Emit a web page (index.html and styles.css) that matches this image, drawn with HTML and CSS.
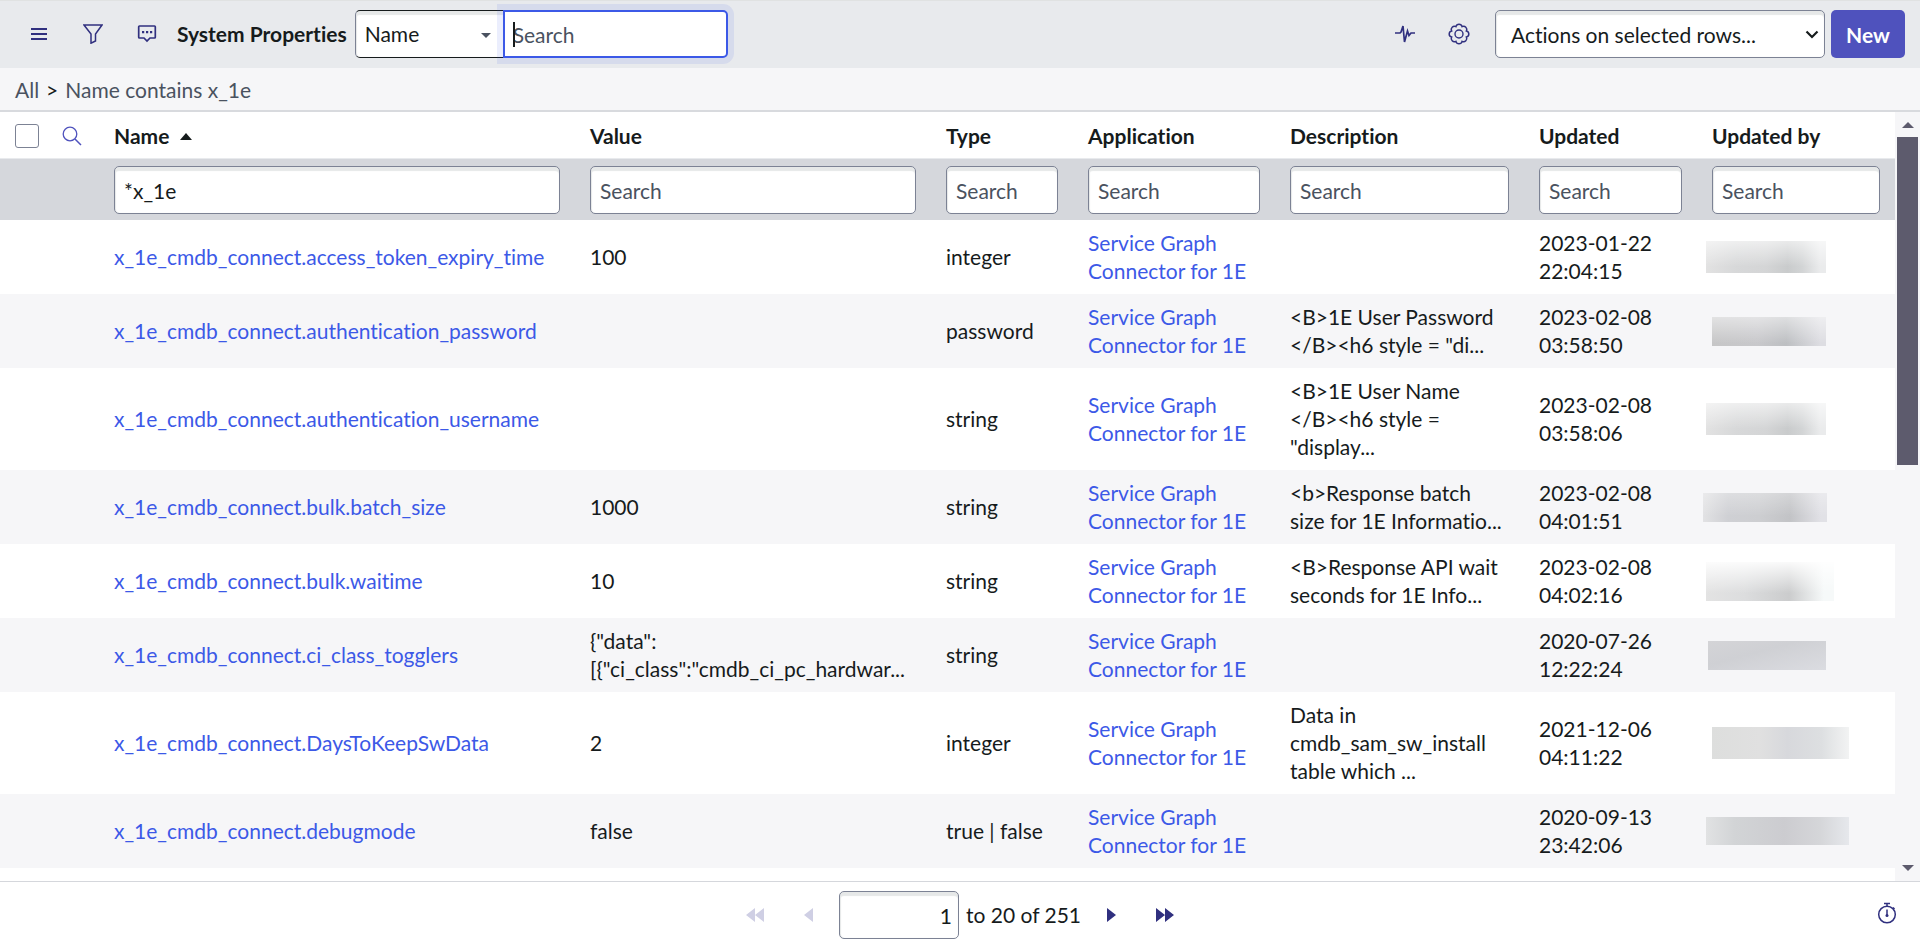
FILE: index.html
```
<!DOCTYPE html>
<html lang="en">
<head>
    <meta charset="utf-8">
    <title>System Properties</title>
    <link rel="stylesheet" href="styles.css">
</head>
<body>
    <header class="toolbar">
        <button class="icon-btn" aria-label="Menu">
            <svg width="20" height="20" viewBox="0 0 20 20"><path d="M2 5h16M2 10h16M2 15h16" fill="none" stroke="currentColor" stroke-width="2"/></svg>
        </button>
        <button class="icon-btn" aria-label="Filter">
            <svg width="20" height="20" viewBox="0 0 20 20"><path d="M1 1h18l-6.500 9v7L8 19.200V10z" fill="none" stroke="currentColor" stroke-width="1.500"/></svg>
        </button>
        <button class="icon-btn" aria-label="Chat">
            <svg width="20" height="20" viewBox="0 0 20 20"><path d="M2.500 2h15q.8 0 .8.8v10.400q0 .8-.8.8H13l-3 3-3-3H2.500q-.8 0-.8-.8V2.800q0-.8.8-.8z" fill="none" stroke="currentColor" stroke-width="1.700"/><path d="M5 7h2.200v2.200H5zM9 7h2.200v2.200H9zM13 7h2.200v2.200H13z" fill="currentColor"/></svg>
        </button>
        <h1 class="title">System Properties</h1>
        <div class="search-group">
            <div class="field-wrap">
                <select class="control field" aria-label="Search field">
                    <option>Name</option>
                </select>
            </div>
            <div class="goto-wrap">
                <input class="control goto" type="text" placeholder="Search" aria-label="Search">
                <span class="caret"></span>
            </div>
        </div>
        <div class="toolbar-right">
            <button class="icon-btn" aria-label="Activity">
                <svg width="20" height="20" viewBox="0 0 20 20"><path d="M0 9h5l1-1 2-6 1.500 16L12.500 7l1.500 4.500L16 9h4" fill="none" stroke="currentColor" stroke-width="1.700"/></svg>
            </button>
            <button class="icon-btn" aria-label="Settings">
                <svg width="22" height="22" viewBox="0 0 22 22"><path d="M18.400 14.100A3.200 3.200 0 0 1 14.100 18.400A3.200 3.200 0 0 1 7.900 18.400A3.200 3.200 0 0 1 3.600 14.100A3.200 3.200 0 0 1 3.600 7.900A3.200 3.200 0 0 1 7.900 3.600A3.200 3.200 0 0 1 14.100 3.600A3.200 3.200 0 0 1 18.400 7.900A3.200 3.200 0 0 1 18.400 14.100z" fill="none" stroke="currentColor" stroke-width="1.500"/><circle cx="11" cy="11" r="4" fill="none" stroke="currentColor" stroke-width="1.400"/></svg>
            </button>
            <div class="actions-wrap">
                <select class="control actions" aria-label="Actions">
                    <option>Actions on selected rows...</option>
                </select>
                <svg class="chevron" width="14" height="9" viewBox="0 0 14 9"><path d="M1.500 1.500L7 7l5.500-5.500" fill="none" stroke="currentColor" stroke-width="2.200"/></svg>
            </div>
            <button class="new-btn">New</button>
        </div>
    </header>

    <nav class="breadcrumb">
        <a href="#">All</a><span class="sep">&gt;</span><a href="#">Name contains x_1e</a>
    </nav>

    <main class="list">
        <div class="list-scroll">
            <table>
                <colgroup>
                    <col class="col-check"><col class="col-icon"><col><col class="col-value"><col class="col-type">
                    <col class="col-app"><col class="col-desc"><col class="col-updated"><col class="col-by">
                </colgroup>
                <thead>
                    <tr class="head-row">
                        <th><input class="check" type="checkbox" aria-label="Select all"></th>
                        <th>
                            <button class="find-btn" aria-label="Toggle search row">
                                <svg width="20" height="20" viewBox="0 0 20 20"><circle cx="8" cy="8" r="6.800" fill="none" stroke="currentColor" stroke-width="1.300"/><path d="M13 13l6 6" stroke="currentColor" stroke-width="1.500"/></svg>
                            </button>
                        </th>
                        <th>Name <span class="sort"></span></th>
                        <th>Value</th>
                        <th>Type</th>
                        <th>Application</th>
                        <th>Description</th>
                        <th>Updated</th>
                        <th>Updated by</th>
                    </tr>
                    <tr class="filter-row">
                        <td></td>
                        <td></td>
                        <td><input class="control" type="text" value="*x_1e" aria-label="Search name"></td>
                        <td><input class="control" type="text" placeholder="Search" aria-label="Search value"></td>
                        <td><input class="control" type="text" placeholder="Search" aria-label="Search type"></td>
                        <td><input class="control" type="text" placeholder="Search" aria-label="Search application"></td>
                        <td><input class="control" type="text" placeholder="Search" aria-label="Search description"></td>
                        <td><input class="control" type="text" placeholder="Search" aria-label="Search updated"></td>
                        <td><input class="control" type="text" placeholder="Search" aria-label="Search updated by"></td>
                    </tr>
                </thead>
                <tbody>
                    <tr>
                        <td></td><td></td>
                        <td><a href="#">x_1e_cmdb_connect.access_token_expiry_time</a></td>
                        <td>100</td>
                        <td>integer</td>
                        <td><a href="#">Service Graph Connector for 1E</a></td>
                        <td></td>
                        <td>2023-01-22 22:04:15</td>
                        <td><span class="masked"></span></td>
                    </tr>
                    <tr>
                        <td></td><td></td>
                        <td><a href="#">x_1e_cmdb_connect.authentication_password</a></td>
                        <td></td>
                        <td>password</td>
                        <td><a href="#">Service Graph Connector for 1E</a></td>
                        <td>&lt;B&gt;1E User Password &lt;/B&gt;&lt;h6 style = "di...</td>
                        <td>2023-02-08 03:58:50</td>
                        <td><span class="masked dark"></span></td>
                    </tr>
                    <tr>
                        <td></td><td></td>
                        <td><a href="#">x_1e_cmdb_connect.authentication_username</a></td>
                        <td></td>
                        <td>string</td>
                        <td><a href="#">Service Graph Connector for 1E</a></td>
                        <td>&lt;B&gt;1E User Name &lt;/B&gt;&lt;h6 style = "display...</td>
                        <td>2023-02-08 03:58:06</td>
                        <td><span class="masked"></span></td>
                    </tr>
                    <tr>
                        <td></td><td></td>
                        <td><a href="#">x_1e_cmdb_connect.bulk.batch_size</a></td>
                        <td>1000</td>
                        <td>string</td>
                        <td><a href="#">Service Graph Connector for 1E</a></td>
                        <td>&lt;b&gt;Response batch size for 1E Informatio...</td>
                        <td>2023-02-08 04:01:51</td>
                        <td><span class="masked wide"></span></td>
                    </tr>
                    <tr>
                        <td></td><td></td>
                        <td><a href="#">x_1e_cmdb_connect.bulk.waitime</a></td>
                        <td>10</td>
                        <td>string</td>
                        <td><a href="#">Service Graph Connector for 1E</a></td>
                        <td>&lt;B&gt;Response API wait seconds for 1E Info...</td>
                        <td>2023-02-08 04:02:16</td>
                        <td><span class="masked tall"></span></td>
                    </tr>
                    <tr>
                        <td></td><td></td>
                        <td><a href="#">x_1e_cmdb_connect.ci_class_togglers</a></td>
                        <td>{"data":<br>[{"ci_class":"cmdb_ci_pc_hardwar...</td>
                        <td>string</td>
                        <td><a href="#">Service Graph Connector for 1E</a></td>
                        <td></td>
                        <td>2020-07-26 12:22:24</td>
                        <td><span class="masked flat"></span></td>
                    </tr>
                    <tr>
                        <td></td><td></td>
                        <td><a href="#">x_1e_cmdb_connect.DaysToKeepSwData</a></td>
                        <td>2</td>
                        <td>integer</td>
                        <td><a href="#">Service Graph Connector for 1E</a></td>
                        <td>Data in cmdb_sam_sw_install table which ...</td>
                        <td>2021-12-06 04:11:22</td>
                        <td><span class="masked long"></span></td>
                    </tr>
                    <tr>
                        <td></td><td></td>
                        <td><a href="#">x_1e_cmdb_connect.debugmode</a></td>
                        <td>false</td>
                        <td>true | false</td>
                        <td><a href="#">Service Graph Connector for 1E</a></td>
                        <td></td>
                        <td>2020-09-13 23:42:06</td>
                        <td><span class="masked longer"></span></td>
                    </tr>
                </tbody>
            </table>
        </div>
        <div class="scrollbar">
            <span class="arrow-up"></span>
            <div class="track"><div class="thumb"></div></div>
            <span class="arrow-down"></span>
        </div>
    </main>

    <footer class="pager">
        <button class="page-btn first" aria-label="First page" disabled>
            <svg width="18" height="14" viewBox="0 0 18 14"><path d="M9 0v14L0 7zM18 0v14L9 7z" fill="currentColor"/></svg>
        </button>
        <button class="page-btn prev" aria-label="Previous page" disabled>
            <svg width="9" height="14" viewBox="0 0 9 14"><path d="M9 0v14L0 7z" fill="currentColor"/></svg>
        </button>
        <input class="control page-input" type="text" value="1" aria-label="Skip to row">
        <span class="page-text">to 20 of 251</span>
        <button class="page-btn next" aria-label="Next page">
            <svg width="9" height="14" viewBox="0 0 9 14"><path d="M0 0v14l9-7z" fill="currentColor"/></svg>
        </button>
        <button class="page-btn" aria-label="Last page">
            <svg width="18" height="14" viewBox="0 0 18 14"><path d="M0 0v14l9-7zM9 0v14l9-7z" fill="currentColor"/></svg>
        </button>
        <button class="timer" aria-label="Response time">
            <svg width="20" height="22" viewBox="0 0 20 22"><circle cx="10" cy="12.500" r="8.300" fill="none" stroke="currentColor" stroke-width="1.500"/><path d="M7 1.500h6M10 1.500v3M16 5.500l1.500 1.500M10 7.500v6" fill="none" stroke="currentColor" stroke-width="1.500"/><circle cx="10" cy="13.500" r="1.500" fill="currentColor"/></svg>
        </button>
    </footer>
</body>
</html>
```
FILE: styles.css
```
* {
    box-sizing: border-box;
}
body {
    margin: 0;
    height: 100vh;
    display: flex;
    flex-direction: column;
    overflow: hidden;
    font-family: Lato, sans-serif;
    font-size: 21px;
    line-height: 28px;
    font-variant-ligatures: none;
    color: #161b1c;
    background-color: #fff;
}
a {
    color: #3c59e7;
    text-decoration: none;
}
button {
    font: inherit;
    border: none;
    background: none;
    padding: 0;
    cursor: pointer;
}
svg {
    display: block;
}

/* form controls */
.control {
    display: block;
    width: 100%;
    height: 48px;
    padding: 2px 9px 0;
    font: inherit;
    color: #161b1c;
    background-color: #fff;
    border: 1px solid #7c8294;
    border-radius: 5px;
    box-shadow: inset 0 4px 1px #e6e8e8, inset 1px 0 1px #e6e8e8;
    outline: none;
    appearance: none;
}
.control::placeholder {
    color: #4a5260;
    opacity: 1;
}

/* top bar */
.toolbar {
    display: flex;
    align-items: center;
    flex: none;
    height: 68px;
    padding: 0 15px 0 12px;
    background-color: #e8eaed;
    box-shadow: inset 0 1px #e0e2e2;
}
.icon-btn {
    display: flex;
    align-items: center;
    justify-content: center;
    width: 54px;
    height: 48px;
    color: #30307f;
}
.title {
    margin: 0 8px 0 3px;
    font-size: 21px;
    font-weight: 700;
    white-space: nowrap;
}
.search-group {
    display: flex;
}
.field-wrap {
    position: relative;
    width: 148px;
}
.field-wrap::after {
    content: "";
    position: absolute;
    right: 12px;
    top: 23px;
    border: 5px solid transparent;
    border-top-color: #4a5260;
    border-bottom: none;
}
.field {
    padding-top: 0;
    border-color: #161b1c;
    border-left-color: #7c8294;
    border-right: none;
    border-radius: 5px 0 0 5px;
}
.goto-wrap {
    position: relative;
    width: 225px;
}
.goto {
    border: 2px solid #3c59e7;
    border-radius: 0 5px 5px 0;
    box-shadow: 0 0 0 6px rgba(60, 89, 231, 0.1);
    padding: 0 8px;
}
.caret {
    position: absolute;
    left: 10px;
    top: 12px;
    width: 2px;
    height: 25px;
    background-color: #161b1c;
}
.toolbar-right {
    display: flex;
    align-items: center;
    margin-left: auto;
}
.actions-wrap {
    position: relative;
    width: 330px;
    margin: 0 6px 0 9px;
}
.actions {
    padding: 2px 15px 0;
}
.chevron {
    position: absolute;
    right: 6px;
    top: 20px;
}
.new-btn {
    width: 74px;
    height: 48px;
    padding-top: 2px;
    color: #fff;
    font-weight: 700;
    background-color: #4f52bd;
    border-radius: 5px;
}

.breadcrumb {
    flex: none;
    height: 44px;
    padding: 8px 15px;
    background-color: #f6f6f8;
    border-bottom: 2px solid #d8dade;
}
.breadcrumb a {
    color: #4a5260;
}
.sep {
    margin: 0 7px;
}

/* list */
.list {
    display: flex;
    flex: 1;
    min-height: 0;
}
.list-scroll {
    flex: 1;
    overflow: hidden;
}
table {
    width: 100%;
    table-layout: fixed;
    border-spacing: 0;
}
.col-check { width: 46px; }
.col-icon { width: 53px; }
.col-value { width: 356px; }
.col-type { width: 142px; }
.col-app { width: 202px; }
.col-desc { width: 249px; }
.col-updated { width: 173px; }
.col-by { width: 198px; }
th, td {
    padding: 9px 15px;
    text-align: left;
    vertical-align: middle;
}
.head-row th {
    height: 47px;
    padding: 10px 15px 8px;
    font-weight: 700;
    border-bottom: 1px solid #e8eaed;
}
.filter-row td {
    height: 61px;
    padding: 6px 15px;
    background-color: #d5d7dc;
}
tbody tr:nth-child(even) {
    background-color: #f6f6f8;
}
.check {
    display: block;
    width: 24px;
    height: 24px;
    margin: 0;
    appearance: none;
    background-color: #fff;
    border: 1px solid #7c8294;
    border-radius: 3px;
}
.find-btn {
    display: block;
    margin-left: 1px;
    color: #4f52bd;
}
.sort {
    display: inline-block;
    margin-left: 6px;
    vertical-align: 4px;
    border: 6px solid transparent;
    border-bottom: 7px solid #161b1c;
    border-top: none;
}

/* hidden user names */
.masked {
    display: block;
    width: 120px;
    height: 32px;
    margin-left: -6px;
    background:
        linear-gradient(rgba(255, 255, 255, 0.6), transparent 80%),
        linear-gradient(90deg, #e2e2e2, #d7d8d9 25%, #d4d5d6 50%, #c9cbcc 68%, #d2d4d5 80%, #eaebec 95%);
}
.masked.dark {
    width: 114px;
    margin-left: 0;
    height: 29px;
    background:
        linear-gradient(rgba(255, 255, 255, 0.5), transparent 90%),
        linear-gradient(90deg, #c6c6c7, #c8c8cb 40%, #bdbfc2 65%, #dddde2 95%);
}
.masked.wide {
    width: 124px;
    height: 29px;
    margin-left: -9px;
    background:
        linear-gradient(rgba(255, 255, 255, 0.3), transparent 80%),
        linear-gradient(90deg, #e2e2e4, #cfd0d4 20%, #cdced1 45%, #c2c3c6 70%, #e1e1e6 95%);
}
.masked.tall {
    width: 128px;
    height: 39px;
    background:
        linear-gradient(rgba(255, 255, 255, 0.9), transparent 80%),
        linear-gradient(90deg, #e3e3e3, #dcddde 30%, #cbcccd 65%, #f6f9f9 92%);
}
.masked.flat {
    width: 118px;
    height: 29px;
    margin-left: -4px;
    background: linear-gradient(165deg, #d4d4d7, #cfd0d4 40%, #dbdce1);
}
.masked.long {
    width: 137px;
    margin-left: 0;
    background: linear-gradient(90deg, #dddedd, #e0e0e0 35%, #d7d8dc 55%, #dddfe1 80%, #f2f3f3);
}
.masked.longer {
    width: 143px;
    height: 28px;
    background: linear-gradient(90deg, #e1e2e3, #d2d4d6 20%, #ccccd0 55%, #d5d6d9 80%, #e6e8ec);
}

.scrollbar {
    display: flex;
    flex-direction: column;
    align-items: center;
    width: 25px;
    padding: 10px 2px;
    background-color: #f6f6f8;
}
.arrow-up, .arrow-down {
    border: 6px solid transparent;
}
.arrow-up {
    border-top: none;
    border-bottom-color: #5d5b6d;
}
.arrow-down {
    border-bottom: none;
    border-top-color: #5d5b6d;
}
.track {
    flex: 1;
    width: 100%;
    padding: 9px 0;
}
.thumb {
    height: 46%;
    max-height: 328px;
    background-color: #5d5b6d;
}

/* pager */
.pager {
    position: relative;
    display: flex;
    align-items: center;
    justify-content: center;
    flex: none;
    height: 66px;
    border-top: 1px solid #d5d7dc;
}
.page-btn {
    color: #30307f;
}
.page-btn:disabled {
    color: #cfcfe4;
}
.first {
    margin-right: 40px;
}
.prev {
    margin-right: 26px;
}
.page-input {
    width: 120px;
    padding: 2px 6px 0;
    text-align: right;
}
.page-text {
    margin: 0 26px 0 7px;
}
.next {
    margin-right: 40px;
}
.timer {
    position: absolute;
    right: 23px;
    top: 20px;
    color: #30307f;
}
```
